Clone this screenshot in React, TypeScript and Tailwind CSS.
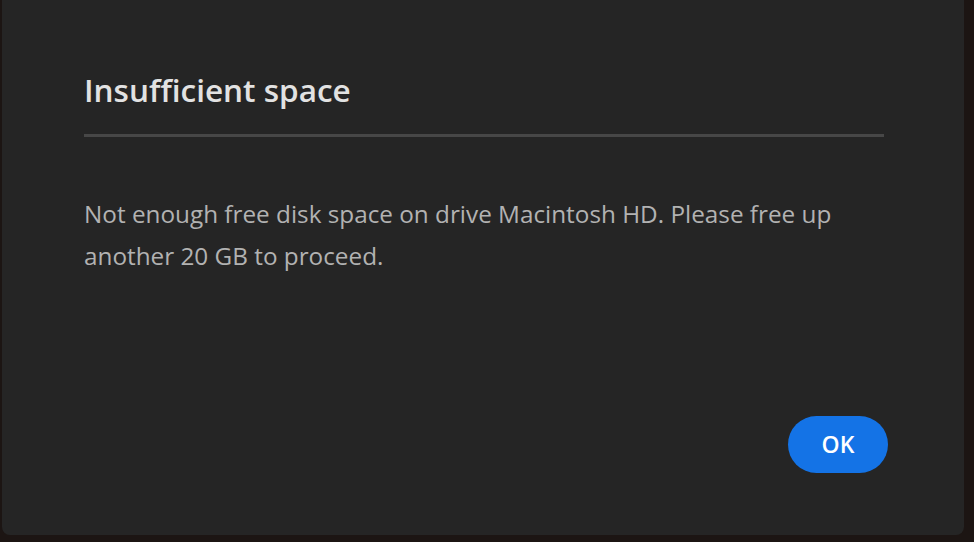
export default function App() {
  return (
    <div className="h-[542px] w-[974px] overflow-hidden bg-[#1c1513] pl-[2px] pr-[10px]" style={{ fontFamily: '"Open Sans", "Liberation Sans", sans-serif' }}>
      <div className="flex h-[535px] w-[962px] flex-col rounded-b-[8px] bg-[#252525] pl-[82px] pr-[80px]">
        <h1 className="mt-[68px] text-[31.5px] leading-[44px] font-semibold text-[#e2e2e2]">Insufficient space</h1>
        <div className="mt-[22px] h-[3px] bg-[#474747]" />
        <p className="mt-[56px] text-[24.3px] leading-[42px] text-[#b2b2b2]">
          Not enough free disk space on drive Macintosh HD. Please free up another 20 GB to proceed.
        </p>
        <div className="mt-auto mb-[62px] flex justify-end">
          <button className="-mr-[4px] h-[57px] w-[100px] rounded-full bg-[#1473e6] text-[23px] font-semibold text-white">
            OK
          </button>
        </div>
      </div>
    </div>
  );
}
